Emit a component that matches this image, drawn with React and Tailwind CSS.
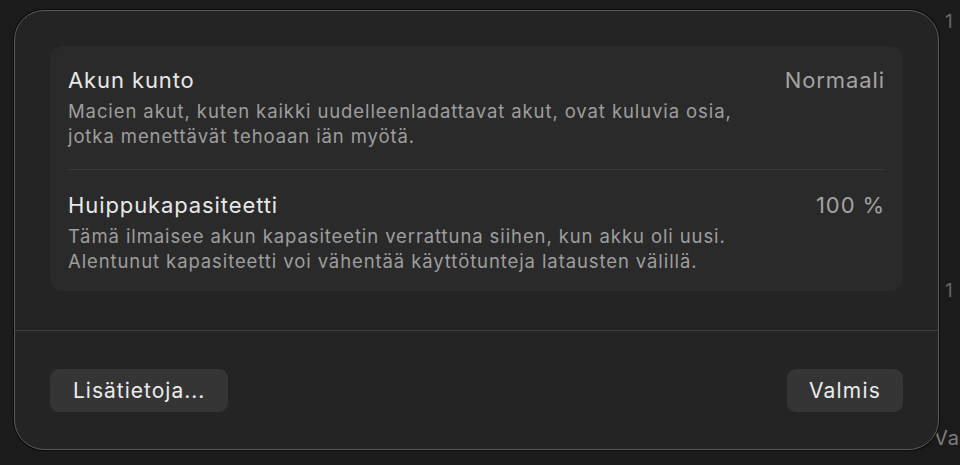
import React from 'react';

const rows = [
  {
    title: 'Akun kunto',
    value: 'Normaali',
    lines: [
      'Macien akut, kuten kaikki uudelleenladattavat akut, ovat kuluvia osia,',
      'jotka menettävät tehoaan iän myötä.',
    ],
  },
  {
    title: 'Huippukapasiteetti',
    value: '100 %',
    lines: [
      'Tämä ilmaisee akun kapasiteetin verrattuna siihen, kun akku oli uusi.',
      'Alentunut kapasiteetti voi vähentää käyttötunteja latausten välillä.',
    ],
  },
];

function InfoRow({ row }) {
  return (
    <div className="flex justify-between gap-4">
      <div>
        <div className="text-[22px] leading-[28px] tracking-[0.9px] text-[#e8e8e8]">{row.title}</div>
        <div className="mt-[5px] text-[18.5px] leading-[25px] tracking-[0.9px] text-[#9e9e9e]">
          {row.lines.map((l) => (
            <div key={l}>{l}</div>
          ))}
        </div>
      </div>
      <div className="text-[22px] leading-[28px] tracking-[0.9px] text-[#a3a3a3]">{row.value}</div>
    </div>
  );
}

export default function App() {
  return (
    <div
      className="relative w-[960px] h-[465px] overflow-hidden bg-[#1b1b1b] flex"
      style={{ fontFamily: 'Inter, "Noto Sans", sans-serif' }}
    >
      {/* background window bits peeking out */}
      <div className="absolute left-[945px] top-[8px] text-[19px] text-[#666]">1</div>
      <div className="absolute left-[945px] top-[277px] text-[19px] text-[#666]">1</div>
      <div className="absolute left-[934px] top-[423px] text-[20px] tracking-[1px] text-[#7c7c7c]">Va</div>

      <div className="relative ml-[14px] mt-[10px] w-[925px] h-[440px] rounded-[30px] bg-[#242424] border border-[#5c5c5c] shadow-[0_0_0_1px_#0a0a0a] flex flex-col">
        <div className="px-[35px] pt-[35px] pb-[39px]">
          <div className="rounded-[13px] bg-[#2a2a2a] px-[18px] pt-[20px] pb-[17px]">
            <InfoRow row={rows[0]} />
            <div className="h-px bg-[#3a3a3a] mt-[20px] mb-[21px]" />
            <InfoRow row={rows[1]} />
          </div>
        </div>
        <div className="h-px bg-[#3d3d3d]" />
        <div className="flex justify-between px-[35px] pt-[38px]">
          <button className="h-[43px] px-[23px] rounded-[9px] bg-[#353535] text-[21px] tracking-[1px] text-[#ececec]">
            Lisätietoja...
          </button>
          <button className="h-[43px] px-[22px] rounded-[9px] bg-[#353535] text-[21px] tracking-[1.2px] text-[#ececec]">
            Valmis
          </button>
        </div>
      </div>
    </div>
  );
}
